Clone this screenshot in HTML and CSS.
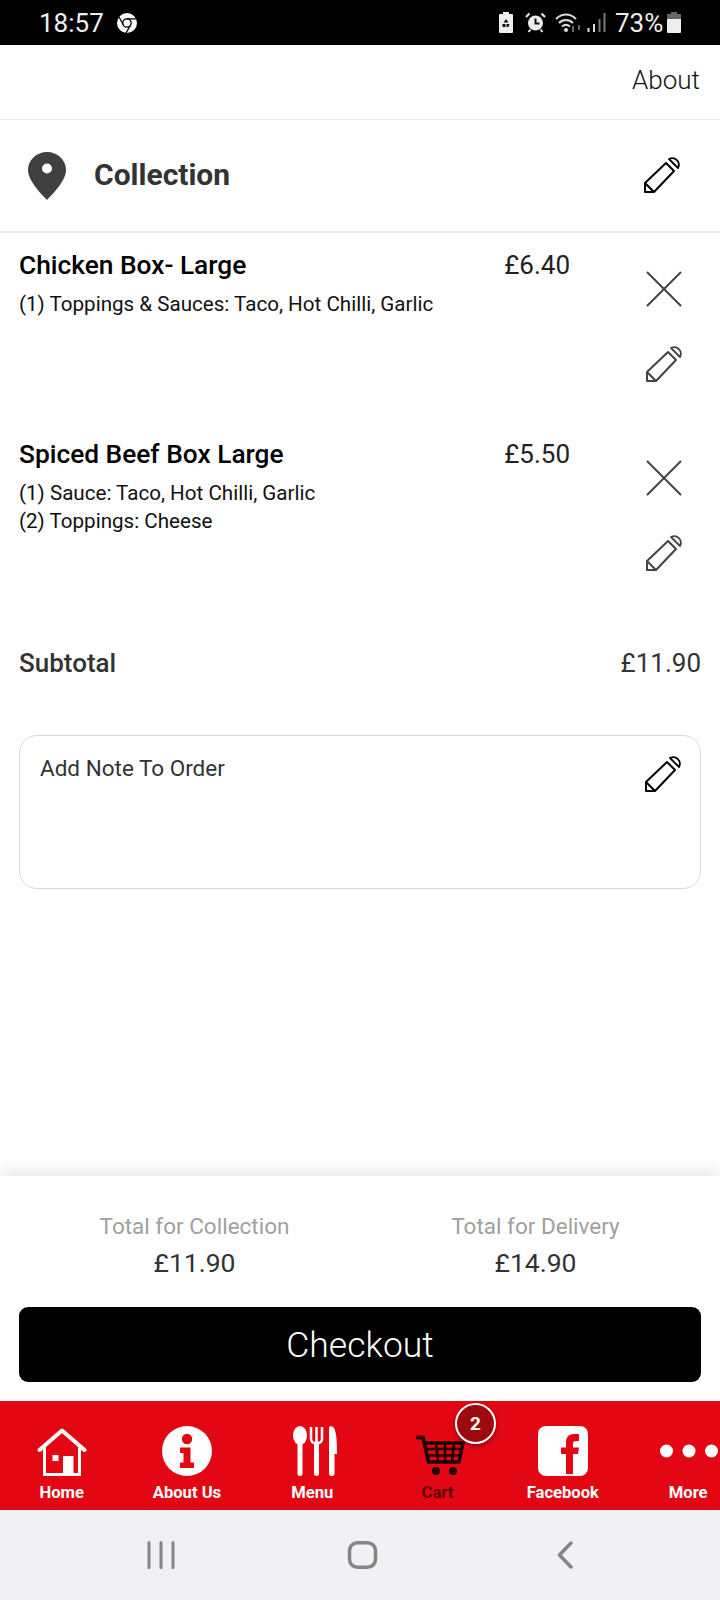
FILE: index.html
```html
<!DOCTYPE html>
<html lang="en">
<head>
    <meta charset="UTF-8">
    <meta name="viewport" content="width=device-width, initial-scale=1.0">
    <title>Cart</title>
    <link rel="stylesheet" href="styles.css">
</head>
<body>
<svg class="sprites" width="0" height="0">
    <symbol id="pencil" viewBox="0 0 36 36">
        <path d="M1 35V26L22 6 30 14 10 35ZM1 26l9 9" fill="none" stroke="currentColor" stroke-width="2" stroke-linejoin="round"/>
        <path d="M25 2 34 11C37 5 31-1 25 2Z" fill="none" stroke="currentColor" stroke-width="1.800" stroke-linejoin="round"/>
    </symbol>
    <symbol id="cross" viewBox="0 0 36 36">
        <path d="M1.500 1.500l33 33M34.500 1.500l-33 33" fill="none" stroke="currentColor" stroke-width="2" stroke-linecap="round"/>
    </symbol>
</svg>

<div class="status-bar">
    <div class="status-left">
        <span class="status-time">18:57</span>
        <svg class="chrome-icon" width="20" height="20" viewBox="0 0 20 20">
            <circle cx="10" cy="10" r="10" fill="#fff"/>
            <circle cx="10" cy="10" r="4.200" fill="none" stroke="#000" stroke-width="1.300"/>
            <path d="M10 5.800h9M6.400 12 2 4M13.600 12l-4.600 8" stroke="#000" stroke-width="1.300" fill="none"/>
        </svg>
    </div>
    <div class="status-right">
        <svg width="14" height="21" viewBox="0 0 14 21">
            <path d="M4 0h6v2h3a1 1 0 0 1 1 1v17a1 1 0 0 1-1 1H1a1 1 0 0 1-1-1V3a1 1 0 0 1 1-1h3z" fill="#eee"/>
            <path d="M7 7l2.500 3.500h-5zM3.500 12h3v3h-3zM7.500 12h3l-1 3h-2z" fill="#111"/>
        </svg>
        <svg class="alarm-icon" width="21" height="21" viewBox="0 0 21 21">
            <circle cx="10.500" cy="11" r="7.500" fill="#eee"/>
            <path d="M10.500 6.500v5h4" fill="none" stroke="#111" stroke-width="2"/>
            <path d="M1 5l3.500-3.500M20 5l-3.500-3.500M3.500 20l2-2.500M17.500 20l-2-2.500" stroke="#eee" stroke-width="2"/>
        </svg>
        <svg class="wifi-icon" width="26" height="20" viewBox="0 0 26 20">
            <path d="M1 6c6-6 14-6 20 0M4 10c4-4 10-4 14 0M7 13.500c2.500-2 5.500-2 8 0" fill="none" stroke="#ddd" stroke-width="2"/>
            <circle cx="11" cy="17" r="2" fill="#ddd"/>
            <path d="M18 13v6M24 12v5" stroke="#888" stroke-width="1.500"/>
        </svg>
        <svg class="signal-icon" width="19" height="19" viewBox="0 0 19 19">
            <path d="M1.500 19v-4M7 19v-8" stroke="#ddd" stroke-width="2"/>
            <path d="M12.500 19V6M17.500 19V0" stroke="#777" stroke-width="2"/>
        </svg>
        <span class="status-battery">73%</span>
        <svg class="battery-icon" width="14" height="21" viewBox="0 0 14 21">
            <path d="M4 0h6v2H4zM0 2h14v5H0z" fill="#666"/>
            <path d="M0 7h14v13a1 1 0 0 1-1 1H1a1 1 0 0 1-1-1z" fill="#eee"/>
        </svg>
    </div>
</div>

<div class="top-bar">
    <span class="about-link">About</span>
</div>

<div class="order-type">
    <svg class="pin-icon" width="38" height="48" viewBox="0 0 38 48">
        <path fill-rule="evenodd" d="M19 0C8.500 0 0 8 0 18c0 10 12 23 19 30 7-7 19-20 19-30C38 8 29.500 0 19 0zm0 11.500a5 5 0 1 1 0 10 5 5 0 0 1 0-10z" fill="#404040"/>
    </svg>
    <span class="order-type-label">Collection</span>
    <svg class="icon-36 order-type-edit"><use href="#pencil"/></svg>
</div>

<main class="cart">
    <div class="cart-item">
        <div class="item-info">
            <h2 class="item-name">Chicken Box- Large</h2>
            <p class="item-option">(1) Toppings &amp; Sauces: Taco, Hot Chilli, Garlic</p>
        </div>
        <div class="item-price">£6.40</div>
        <div class="item-actions">
            <svg class="icon-36"><use href="#cross"/></svg>
            <svg class="icon-36"><use href="#pencil"/></svg>
        </div>
    </div>

    <div class="cart-item">
        <div class="item-info">
            <h2 class="item-name">Spiced Beef Box Large</h2>
            <p class="item-option">(1) Sauce: Taco, Hot Chilli, Garlic</p>
            <p class="item-option">(2) Toppings: Cheese</p>
        </div>
        <div class="item-price">£5.50</div>
        <div class="item-actions">
            <svg class="icon-36"><use href="#cross"/></svg>
            <svg class="icon-36"><use href="#pencil"/></svg>
        </div>
    </div>

    <div class="subtotal">
        <span class="subtotal-label">Subtotal</span>
        <span class="subtotal-value">£11.90</span>
    </div>

    <div class="note-box">
        <span class="note-text">Add Note To Order</span>
        <svg class="icon-36 note-edit"><use href="#pencil"/></svg>
    </div>
</main>

<section class="checkout-panel">
    <div class="totals">
        <div class="total-col">
            <div class="total-label">Total for Collection</div>
            <div class="total-value">£11.90</div>
        </div>
        <div class="total-col">
            <div class="total-label">Total for Delivery</div>
            <div class="total-value">£14.90</div>
        </div>
    </div>
    <button class="checkout-button">Checkout</button>
</section>

<nav class="tab-bar">
    <div class="tab">
        <svg width="50" height="50" viewBox="0 0 50 50">
            <path d="M2.500 24 25 4.500 47.500 24" fill="none" stroke="#fff" stroke-width="4" stroke-linejoin="round" stroke-linecap="round"/>
            <path d="M7.500 21v27.500h35V21" fill="none" stroke="#fff" stroke-width="3"/>
            <path d="M26 30h10.500v18H26zM15.500 29h6v6h-6z" fill="#fff"/>
        </svg>
        <span class="tab-label">Home</span>
    </div>
    <div class="tab">
        <svg width="50" height="50" viewBox="0 0 50 50">
            <circle cx="25" cy="25" r="25" fill="#fff"/>
            <circle cx="25" cy="13" r="5.200" fill="#e30613"/>
            <path d="M18 21.500h10.500v15H32V42H18v-5.500h3.500V27H18z" fill="#e30613"/>
        </svg>
        <span class="tab-label">About Us</span>
    </div>
    <div class="tab">
        <svg class="menu-icon" width="44" height="50" viewBox="0 0 44 50">
            <ellipse cx="7" cy="9.500" rx="7" ry="9.500" fill="#fff"/>
            <rect x="4.500" y="14" width="5" height="36" rx="2.500" fill="#fff"/>
            <path d="M18 1v12a4 4 0 0 0 4 4h3a4 4 0 0 0 4-4V1M23.500 1v16" fill="none" stroke="#fff" stroke-width="2.500"/>
            <rect x="21" y="15" width="5" height="35" rx="2.500" fill="#fff"/>
            <path d="M38.500 50a2.500 2.500 0 0 1-2.500-2.500V2c0-2.500 3.500-2.500 5 0 3 6 3 17 3 26h-2.500v19.500A2.500 2.500 0 0 1 38.500 50z" fill="#fff"/>
        </svg>
        <span class="tab-label">Menu</span>
    </div>
    <div class="tab tab-active">
        <svg class="cart-icon" width="50" height="50" viewBox="0 0 50 50">
            <g fill="none" stroke="#1c0205">
                <path d="M1 11.500h7L13.500 36H44l4-19H10" stroke-width="3.500"/>
                <path d="M12 23h33M13 29.500h31M21 17l2 19M30 17v19M39 17l-2 19" stroke-width="2.500"/>
            </g>
            <circle cx="21" cy="45" r="4" fill="#1c0205"/>
            <circle cx="38" cy="45" r="4" fill="#1c0205"/>
        </svg>
        <span class="tab-label">Cart</span>
        <span class="cart-badge">2</span>
    </div>
    <div class="tab">
        <svg width="50" height="50" viewBox="0 0 50 50">
            <rect width="50" height="50" rx="8" fill="#fff"/>
            <path d="M28 48V28h-5v-6.500h5V16c0-5 3-8 8-8h5v7h-3c-2 0-3 1-3 2.500v4h6l-1 6.500h-5v20z" fill="#e30613"/>
        </svg>
        <span class="tab-label">Facebook</span>
    </div>
    <div class="tab">
        <svg class="more-icon" width="58" height="50" viewBox="0 0 58 50">
            <circle cx="6.500" cy="25" r="6.500" fill="#fff"/>
            <circle cx="29" cy="25" r="6.500" fill="#fff"/>
            <circle cx="51.500" cy="25" r="6.500" fill="#fff"/>
        </svg>
        <span class="tab-label">More</span>
    </div>
</nav>

<div class="system-nav">
    <svg width="28" height="28" viewBox="0 0 28 28">
        <path d="M2 1.500v25M14 1.500v25M26 1.500v25" stroke="#858585" stroke-width="3" stroke-linecap="round"/>
    </svg>
    <svg class="nav-home" width="32" height="28" viewBox="0 0 32 28">
        <rect x="3.500" y="1.750" width="26" height="24.500" rx="8" fill="none" stroke="#858585" stroke-width="3.500"/>
    </svg>
    <svg width="16" height="28" viewBox="0 0 16 28">
        <path d="M14 2 2.500 14 14 26" fill="none" stroke="#858585" stroke-width="3.500" stroke-linecap="round" stroke-linejoin="round"/>
    </svg>
</div>
</body>
</html>
```

FILE: styles.css
```css
body {
    margin: 0;
    height: 1600px;
    display: flex;
    flex-direction: column;
    overflow: hidden;
    background-color: #fff;
    font-family: Roboto, "Liberation Sans", sans-serif;
    color: #000;
}

.sprites {
    position: absolute;
}

.icon-36 {
    display: block;
    width: 36px;
    height: 36px;
}

/* status bar */
.status-bar {
    flex: 0 0 45px;
    display: flex;
    justify-content: space-between;
    align-items: center;
    padding: 0 39px;
    background-color: #000;
    color: #eee;
}

.status-left {
    display: flex;
    align-items: center;
    gap: 13px;
}

.status-time {
    font-size: 26px;
}

.status-right {
    display: flex;
    align-items: center;
}

.alarm-icon {
    margin-left: 12px;
}

.wifi-icon {
    margin-left: 9px;
}

.signal-icon {
    margin-left: 6px;
}

.status-battery {
    width: 47px;
    margin-left: 9px;
    font-size: 26px;
}

.battery-icon {
    margin-left: 5px;
}

/* header */
.top-bar {
    flex: 0 0 70px;
    display: flex;
    justify-content: flex-end;
    align-items: center;
    padding: 0 20px 4px 0;
    border-bottom: 1px solid #e8e8e8;
}

.about-link {
    font-size: 26px;
    font-weight: 300;
    color: #111;
}

.order-type {
    flex: 0 0 111px;
    display: flex;
    align-items: center;
    padding: 0 40px 0 28px;
    border-bottom: 2px solid #e4e4e4;
}

.order-type-label {
    margin: 0 0 2px 28px;
    font-size: 30px;
    font-weight: 700;
    color: #333;
}

.order-type-edit {
    margin-left: auto;
    margin-bottom: 1px;
    color: #000;
}

/* cart items */
.cart {
    flex: 1;
}

.cart-item {
    height: 189px;
    display: flex;
    padding-left: 19px;
    box-sizing: border-box;
}

.item-info {
    flex: 1;
    padding-top: 17px;
}

.item-name {
    margin: 0 0 10px;
    font-size: 26.300px;
    font-weight: 500;
    line-height: 30px;
}

.item-option {
    margin: 0;
    font-size: 20.600px;
    line-height: 28px;
    color: #111;
}

.item-price {
    padding-top: 17px;
    font-size: 26px;
    line-height: 30px;
    color: #222;
}

.item-actions {
    flex: 0 0 150px;
    display: flex;
    flex-direction: column;
    align-items: center;
    gap: 39px;
    padding-top: 38px;
    padding-left: 38px;
    box-sizing: border-box;
    color: #444;
}

.subtotal {
    display: flex;
    justify-content: space-between;
    align-items: center;
    margin: 37px 19px 0;
    line-height: 30px;
    color: #333;
}

.subtotal-label {
    font-size: 26px;
    font-weight: 500;
}

.subtotal-value {
    font-size: 26px;
}

.note-box {
    display: flex;
    justify-content: space-between;
    align-items: flex-start;
    height: 154px;
    margin: 57px 19px 0;
    padding: 19px 19px 0 20px;
    box-sizing: border-box;
    border: 1px solid #d8d8d8;
    border-radius: 18px;
}

.note-text {
    font-size: 22.500px;
    line-height: 26px;
    color: #333;
}

.note-edit {
    margin-top: 1px;
    color: #000;
}

/* totals */
.checkout-panel {
    flex: 0 0 225px;
    padding: 33px 19px 0;
    box-sizing: border-box;
    background-color: #fff;
    box-shadow: 0 -4px 14px rgba(0, 0, 0, 0.1);
}

.totals {
    display: grid;
    grid-template-columns: 341px 341px;
    margin-left: 5px;
    text-align: center;
}

.total-label {
    font-size: 22.500px;
    line-height: 34px;
    color: #a0a0a0;
}

.total-value {
    margin-top: 3px;
    font-size: 26.500px;
    line-height: 34px;
    color: #333;
}

.checkout-button {
    display: block;
    width: 100%;
    height: 75px;
    margin-top: 27px;
    background-color: #000;
    color: #fff;
    border: none;
    border-radius: 9px;
    font-family: inherit;
    font-size: 35.500px;
    font-weight: 300;
}

/* bottom tabs */
.tab-bar {
    flex: 0 0 109px;
    display: flex;
    margin-right: -20px;
    background-color: #e30613;
}

.tab {
    position: relative;
    flex: 0 0 125.300px;
    height: 109px;
    display: flex;
    flex-direction: column;
    align-items: center;
    padding-top: 25px;
    box-sizing: border-box;
    left: -1px;
}

.tab svg {
    display: block;
}

.tab .menu-icon {
    margin-left: 5px;
}

.tab .cart-icon {
    margin-left: 4px;
}

.tab .more-icon {
    margin-left: 2px;
}

.tab-label {
    margin-top: 6px;
    font-size: 16.600px;
    font-weight: 700;
    line-height: 22px;
    color: #fff;
}

.tab-active .tab-label {
    color: #5a0408;
}

.cart-badge {
    position: absolute;
    top: 2px;
    left: 80px;
    width: 37px;
    height: 37px;
    display: flex;
    align-items: center;
    justify-content: center;
    border: 2.500px solid #fff;
    border-radius: 50%;
    background-color: #9c0a0e;
    box-shadow: 0 2px 4px rgba(0, 0, 0, 0.4);
    color: #fff;
    font-size: 19px;
    font-weight: 700;
}

/* android nav */
.system-nav {
    flex: 0 0 90px;
    display: flex;
    align-items: center;
    justify-content: space-between;
    padding: 0 147px;
    box-sizing: border-box;
    background-color: #f1f1f3;
}

.nav-home {
    margin-left: -8px;
}
```
